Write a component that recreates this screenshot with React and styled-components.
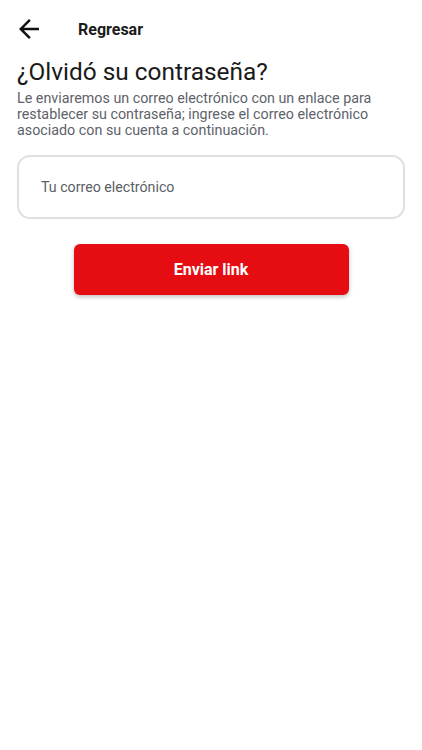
import React, { useState } from 'react'
import styled, { createGlobalStyle } from 'styled-components'

const GlobalStyle = createGlobalStyle`
  body {
    margin: 0;
    background: #ffffff;
    font-family: Roboto, "Noto Sans", sans-serif;
  }
`

const Page = styled.div`
  width: 100%;
  min-height: 750px;
  box-sizing: border-box;
  padding: 0 17px;
`

const Header = styled.div`
  display: flex;
  align-items: center;
  height: 58px;
  margin-left: -3px;
`

const BackButton = styled.button`
  display: flex;
  align-items: center;
  justify-content: center;
  width: 30px;
  height: 30px;
  padding: 0;
  border: none;
  background: none;
  color: #111111;
  cursor: pointer;
`

const HeaderTitle = styled.span`
  margin-left: 34px;
  font-size: 16px;
  font-weight: 700;
  color: #1b1b1b;
`

const Title = styled.h1`
  margin: 0;
  font-size: 24.4px;
  font-weight: 400;
  line-height: 28px;
  color: #1a1a1a;
`

const Description = styled.p`
  margin: 4px 0 0;
  font-size: 14.3px;
  line-height: 16px;
  color: #5e626a;
`

const InputBox = styled.div`
  margin-top: 17px;
  height: 64px;
  box-sizing: border-box;
  border: 2px solid #dfe0e3;
  border-radius: 13px;
  display: flex;
  align-items: center;
  padding: 0 22px;
`

const EmailInput = styled.input`
  width: 100%;
  padding: 0;
  border: none;
  outline: none;
  background: transparent;
  font-family: inherit;
  font-size: 14.2px;
  color: #1a1a1a;
  &::placeholder {
    color: #5a5e66;
  }
`

const Actions = styled.div`
  display: flex;
  justify-content: center;
  margin-top: 25px;
`

const SubmitButton = styled.button`
  width: 275px;
  height: 51px;
  border: none;
  border-radius: 6px;
  background: #e50d12;
  color: #ffffff;
  font-family: inherit;
  font-size: 16px;
  font-weight: 700;
  box-shadow: 0 2px 4px rgba(0, 0, 0, 0.25);
  cursor: pointer;
`

export default function App() {
  let [email, setEmail] = useState('')

  return (
    <Page>
      <GlobalStyle />
      <Header>
        <BackButton aria-label='Regresar'>
          <svg width='30' height='30' viewBox='0 0 24 24' fill='currentColor'>
            <path d='M20 11H7.83l5.59-5.59L12 4l-8 8 8 8 1.41-1.41L7.83 13H20v-2z' />
          </svg>
        </BackButton>
        <HeaderTitle>Regresar</HeaderTitle>
      </Header>
      <Title>¿Olvidó su contraseña?</Title>
      <Description>
        Le enviaremos un correo electrónico con un enlace para restablecer su contraseña; ingrese el correo electrónico asociado con su cuenta a continuación.
      </Description>
      <InputBox>
        <EmailInput
          type='email'
          placeholder='Tu correo electrónico'
          value={email}
          onChange={e => setEmail(e.target.value)}
        />
      </InputBox>
      <Actions>
        <SubmitButton>Enviar link</SubmitButton>
      </Actions>
    </Page>
  )
}
